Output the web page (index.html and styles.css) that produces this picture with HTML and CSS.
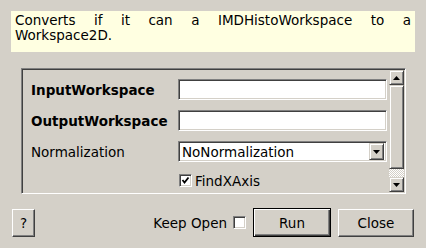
FILE: index.html
```html
<!DOCTYPE html>
<html lang="en">
<head>
    <meta charset="UTF-8">
    <title>ConvertMDHistoToMatrixWorkspace</title>
    <link rel="stylesheet" href="styles.css">
</head>
<body>
    <div class="dialog">
        <!-- Algorithm summary -->
        <div class="summary">
            <span class="first-line">Converts if it can a IMDHistoWorkspace to a</span>
            Workspace2D.
        </div>

        <!-- Property list inside a scroll area -->
        <div class="scroll-area">
            <div class="props">
                <label class="prop-name bold">InputWorkspace</label>
                <input class="text-box" type="text">

                <label class="prop-name bold">OutputWorkspace</label>
                <input class="text-box" type="text">

                <label class="prop-name">Normalization</label>
                <div class="combo">
                    <span class="combo-text">NoNormalization</span>
                    <span class="combo-btn">
                        <svg width="7" height="4" viewBox="0 0 7 4"><polygon points="0,0 7,0 3.5,4" fill="#000"/></svg>
                    </span>
                </div>

                <span></span>
                <div class="check-row">
                    <span class="check-box">
                        <svg width="9" height="9" viewBox="0 0 9 9"><polyline points="1.5,4 3.5,6.5 7.5,1.5" fill="none" stroke="#000" stroke-width="1.8"/></svg>
                    </span>
                    <span>FindXAxis</span>
                </div>
            </div>

            <div class="scrollbar">
                <div class="sb-btn">
                    <svg width="7" height="4" viewBox="0 0 7 4"><polygon points="0,4 7,4 3.5,0" fill="#000"/></svg>
                </div>
                <div class="sb-handle"></div>
                <div class="sb-trough"></div>
                <div class="sb-btn">
                    <svg width="7" height="4" viewBox="0 0 7 4"><polygon points="0,0 7,0 3.5,4" fill="#000"/></svg>
                </div>
            </div>
        </div>

        <!-- Dialog buttons -->
        <div class="button-row">
            <button class="btn help-btn">?</button>
            <span class="spacer"></span>
            <span class="keep-open">Keep Open</span>
            <span class="check-box plain"></span>
            <button class="btn run-btn">Run</button>
            <button class="btn close-btn">Close</button>
        </div>
    </div>
</body>
</html>
```

FILE: styles.css
```css
/* Classic grey dialog */
body {
    margin: 0;
    background-color: #d4d0c8;
    font-family: "DejaVu Sans", sans-serif;
    font-size: 13.5px;
    color: #000;
}

.dialog {
    display: flex;
    flex-direction: column;
    padding-top: 11px;
}

/* Yellow summary box at the top */
.summary {
    margin: 0 11px;
    height: 41px;
    box-sizing: border-box;
    padding: 2px 4px 0 4px;
    background-color: #ffffe1;
    line-height: 15px;
}

.first-line {
    display: block;
    text-align: justify;
    text-align-last: justify;
}

/* Sunken frame around the properties */
.scroll-area {
    display: flex;
    margin: 16px 20px 0 21px;
    height: 126px;
    box-sizing: border-box;
    border: 1px solid;
    border-color: #808080 #fff #fff #808080;
    box-shadow: inset 1px 1px #404040, inset -1px -1px #d4d0c8;
    padding: 1px;
    overflow: hidden;
}

.props {
    flex: 1;
    display: grid;
    grid-template-columns: 147px 209px;
    grid-auto-rows: 21px;
    row-gap: 10px;
    align-items: center;
    padding: 9px 0 0 8px;
}

.prop-name.bold {
    font-weight: bold;
}

.text-box {
    height: 21px;
    box-sizing: border-box;
    margin: 0;
    padding: 0 3px;
    background-color: #fff;
    border: 1px solid;
    border-color: #808080 #fff #fff #808080;
    box-shadow: inset 1px 1px #404040, inset -1px -1px #d4d0c8;
    font: inherit;
    outline: none;
}

/* Drop-down box */
.combo {
    display: flex;
    align-items: center;
    height: 21px;
    box-sizing: border-box;
    background-color: #fff;
    border: 1px solid;
    border-color: #808080 #fff #fff #808080;
    box-shadow: inset 1px 1px #404040, inset -1px -1px #d4d0c8;
    padding: 2px 2px 2px 3px;
}

.combo-text {
    flex: 1;
}

.combo-btn {
    display: flex;
    align-items: center;
    justify-content: center;
    width: 15px;
    height: 17px;
    box-sizing: border-box;
    background-color: #d4d0c8;
    border: 1px solid;
    border-color: #d4d0c8 #404040 #404040 #d4d0c8;
    box-shadow: inset 1px 1px #fff, inset -1px -1px #808080;
}

/* Check boxes */
.check-row {
    display: flex;
    align-items: center;
    gap: 3px;
    padding-left: 1px;
    margin-top: -4px;
}

.check-box {
    display: flex;
    align-items: center;
    justify-content: center;
    width: 13px;
    height: 13px;
    box-sizing: border-box;
    background-color: #fff;
    border: 1px solid;
    border-color: #808080 #fff #fff #808080;
    box-shadow: inset 1px 1px #404040, inset -1px -1px #d4d0c8;
}

/* Vertical scroll bar */
.scrollbar {
    display: flex;
    flex-direction: column;
    width: 15px;
}

.sb-btn,
.sb-handle {
    box-sizing: border-box;
    background-color: #d4d0c8;
    border: 1px solid;
    border-color: #d4d0c8 #404040 #404040 #d4d0c8;
    box-shadow: inset 1px 1px #fff, inset -1px -1px #808080;
}

.sb-btn {
    display: flex;
    align-items: center;
    justify-content: center;
    height: 15px;
}

.sb-handle {
    flex: 1;
}

.sb-trough {
    height: 8px;
    background: repeating-conic-gradient(#fff 0 25%, #d4d0c8 0 50%) 0 0 / 2px 2px;
}

/* Bottom buttons */
.button-row {
    display: flex;
    align-items: center;
    margin-top: 14px;
    padding: 0 12px;
}

.spacer {
    flex: 1;
}

.btn {
    height: 28px;
    box-sizing: border-box;
    background-color: #d4d0c8;
    border: 1px solid;
    border-color: #fff #404040 #404040 #fff;
    box-shadow: inset -1px -1px #808080;
    font: inherit;
    color: #000;
    padding: 0;
}

.help-btn {
    width: 23px;
}

.keep-open {
    margin-right: 6px;
}

.check-box.plain {
    margin-right: 7px;
}

.run-btn {
    width: 78px;
    height: 29px;
    margin-right: 7px;
    border: 1px solid #000;
    box-shadow: inset 1px 1px #fff, inset -1px -1px #404040, inset -2px -2px #808080;
}

.close-btn {
    width: 76px;
}
```
